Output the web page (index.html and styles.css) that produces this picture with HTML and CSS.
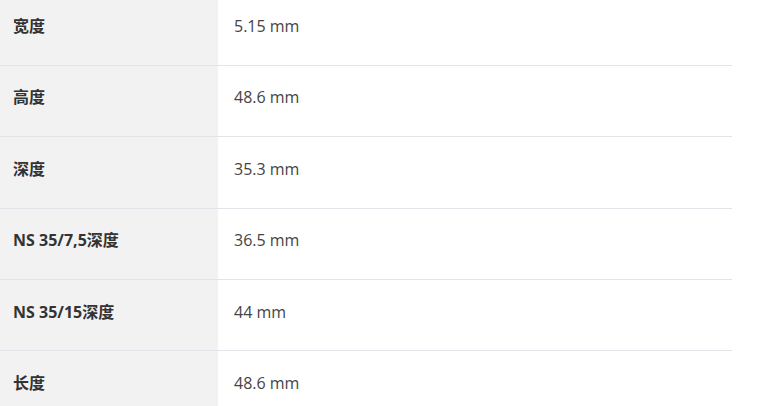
FILE: index.html
```html
<!DOCTYPE html>
<html lang="zh">
<head>
<meta charset="utf-8">
<link rel="stylesheet" href="styles.css">
</head>
<body>
<div class="specs">
  <div class="row"><div class="label">宽度</div><div class="value">5.15 mm</div></div>
  <div class="row"><div class="label">高度</div><div class="value">48.6 mm</div></div>
  <div class="row"><div class="label">深度</div><div class="value">35.3 mm</div></div>
  <div class="row"><div class="label">NS 35/7,5深度</div><div class="value">36.5 mm</div></div>
  <div class="row"><div class="label">NS 35/15深度</div><div class="value">44 mm</div></div>
  <div class="row"><div class="label">长度</div><div class="value">48.6 mm</div></div>
</div>
</body>
</html>
```
FILE: styles.css
```css
html, body {
  margin: 0;
  padding: 0;
  background: #ffffff;
}
body {
  font-family: "Open Sans", "Noto Sans CJK SC", sans-serif;
  font-size: 16px;
  overflow: hidden;
}
.specs {
  width: 732px;
  margin-top: -5.5px;
}
.row {
  display: grid;
  grid-template-columns: 218px 1fr;
  border-bottom: 1px solid #e1e4e9;
}
.label, .value {
  padding: 21.5px 16px 28.9px;
  line-height: 20px;
}
.label {
  background: #f2f2f2;
  padding-left: 13px;
  font-family: "Noto Sans", "Noto Sans CJK SC", sans-serif;
  font-weight: 700;
  color: #333333;
}
.value {
  color: #444444;
}
```
